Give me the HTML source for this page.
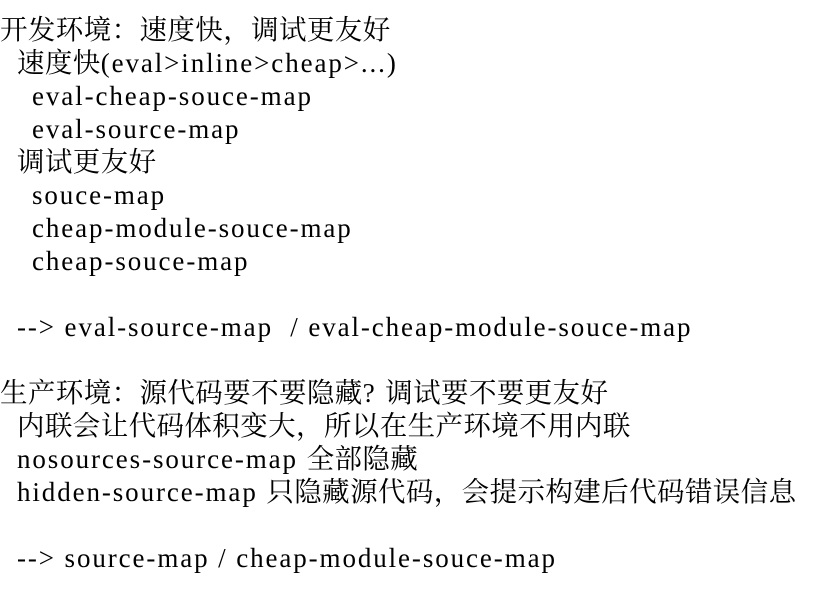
<!DOCTYPE html>
<html><head><meta charset="utf-8"><style>
html,body{margin:0;padding:0;background:#fff;width:823px;height:583px;overflow:hidden}
body{font-family:"Liberation Serif","Noto Serif CJK SC",serif;font-size:27.5px;line-height:33px;color:#000;padding-top:13px}
div{white-space:pre;height:33px;letter-spacing:0.4px}
.l{letter-spacing:1.9px;font-size:27px}
.a{padding-left:0}.b{padding-left:17px}.c{padding-left:32px}
</style></head><body>
<div class="a">开发环境：速度快，调试更友好</div>
<div class="b">速度快<span class="l">(eval&gt;inline&gt;cheap&gt;...)</span></div>
<div class="c"><span class="l">eval-cheap-souce-map</span></div>
<div class="c"><span class="l">eval-source-map</span></div>
<div class="b">调试更友好</div>
<div class="c"><span class="l">souce-map</span></div>
<div class="c"><span class="l">cheap-module-souce-map</span></div>
<div class="c"><span class="l">cheap-souce-map</span></div>
<div></div>
<div class="b"><span class="l">--&gt; eval-source-map  / eval-cheap-module-souce-map</span></div>
<div></div>
<div class="a">生产环境：源代码要不要隐藏<span class="l">? </span>调试要不要更友好</div>
<div class="b">内联会让代码体积变大，所以在生产环境不用内联</div>
<div class="b"><span class="l">nosources-source-map </span>全部隐藏</div>
<div class="b"><span class="l">hidden-source-map </span>只隐藏源代码，会提示构建后代码错误信息</div>
<div></div>
<div class="b"><span class="l">--&gt; source-map / cheap-module-souce-map</span></div>
</body></html>
